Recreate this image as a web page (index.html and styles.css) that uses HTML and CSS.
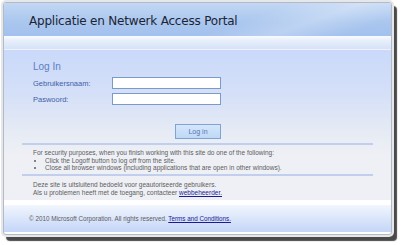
FILE: index.html
```html
<!DOCTYPE html>
<html lang="nl">
<head>
  <meta charset="UTF-8">
  <title>Applicatie en Netwerk Access Portal</title>
  <link rel="stylesheet" href="styles.css">
</head>
<body>
  <div class="window">
    <div class="header">
      <h1 class="title">Applicatie en Netwerk Access Portal</h1>
    </div>
    <div class="band"></div>

    <div class="content">
      <div class="login-box">
        <h2 class="login-title">Log In</h2>
        <div class="login-form">
          <label for="user">Gebruikersnaam:</label>
          <input id="user" type="text" class="field">
          <label for="pass">Paswoord:</label>
          <input id="pass" type="password" class="field">
          <button class="login-btn">Log in</button>
        </div>
      </div>

      <div class="notes">
        <div class="note security">
          <p>For security purposes, when you finish working with this site do one of the following:</p>
          <ul>
            <li>Click the Logoff button to log off from the site.</li>
            <li>Close all browser windows (including applications that are open in other windows).</li>
          </ul>
        </div>
        <div class="note warning">
          <p>Deze site is uitsluitend bedoeld voor geautoriseerde gebruikers.</p>
          <p>Als u problemen heeft met de toegang, contacteer <a href="#">webbeheerder.</a></p>
        </div>
      </div>
    </div>

    <div class="footer">
      <span>&copy; 2010 Microsoft Corporation. All rights reserved. <a href="#">Terms and Conditions.</a></span>
    </div>
  </div>
</body>
</html>
```

FILE: styles.css
```css
* {
  margin: 0;
  padding: 0;
  box-sizing: border-box;
}

body {
  font-family: 'Liberation Sans', Arial, sans-serif;
  background-color: #ffffff;
  width: 404px;
  height: 245px;
  overflow: hidden;
}

.window {
  margin: 2px 0 0 3px;
  width: 389px;
  height: 233px;
  border: 1px solid #b4bac4;
  border-radius: 3px;
  background-color: #ffffff;
  box-shadow: 0 0 0 2px #e6e7ea, 4px 5px 1px 1px #4a4a4a;
  display: flex;
  flex-direction: column;
  overflow: hidden;
}

.header {
  height: 33px;
  padding-left: 25px;
  display: flex;
  align-items: center;
  background: linear-gradient(160deg, rgba(255,255,255,0) 60%, rgba(255,255,255,0.25) 75%, rgba(255,255,255,0) 90%),
              linear-gradient(#c2d7f4, #a9c6ee 60%, #a3c1ee);
}

.title {
  font-family: 'DejaVu Sans', sans-serif;
  font-weight: normal;
  font-size: 12px;
  letter-spacing: -0.2px;
  color: #1c2434;
  padding-top: 2px;
}

.band {
  height: 14px;
  background: linear-gradient(#f8fbff, #e6eefb 40%, #d6e2f8);
  border-bottom: 1px solid #eef2fb;
}

.content {
  height: 150px;
  background: linear-gradient(#cad9fa, #d5e0f8 30%, #e6ebf4 55%, #eef0f5 70%, #eef0f5);
}

.login-box {
  padding: 11px 0 0 29px;
}

.login-title {
  font-weight: normal;
  font-size: 10px;
  line-height: 12px;
  color: #5d7ec4;
}

.login-form {
  width: 188px;
  margin-top: 4px;
  display: grid;
  grid-template-columns: 79px 109px;
  row-gap: 4px;
  align-items: center;
}

.login-form label {
  font-size: 7.5px;
  color: #3e5fa6;
}

.field {
  height: 12px;
  border: 1px solid #7b9acb;
  background-color: #ffffff;
}

.login-btn {
  grid-column: 2;
  justify-self: end;
  width: 46px;
  height: 15px;
  margin-top: 15px;
  border: 1px solid #7fa4d4;
  background: linear-gradient(#d4e6fb, #bfd8f6);
  color: #5577b0;
  font-family: 'Liberation Sans', Arial, sans-serif;
  font-size: 7px;
}

.notes {
  margin: 4px 18px 0 18px;
}

.note {
  border-top: 2px solid #c2cfec;
  padding: 4px 0 2px 11px;
  font-size: 6.5px;
  line-height: 7.5px;
  color: #5c5c5c;
}

.security ul {
  padding-left: 12px;
}

.warning {
  padding-top: 5px;
  line-height: 8.5px;
}

.note a,
.footer a {
  color: #1a1a96;
}

.footer {
  height: 27px;
  margin-top: 5px;
  padding-left: 25px;
  display: flex;
  align-items: center;
  background: linear-gradient(#f2f6fd, #dfe9fb 40%, #c4d5f8);
  font-size: 6.3px;
  color: #5c5c5c;
}
```
